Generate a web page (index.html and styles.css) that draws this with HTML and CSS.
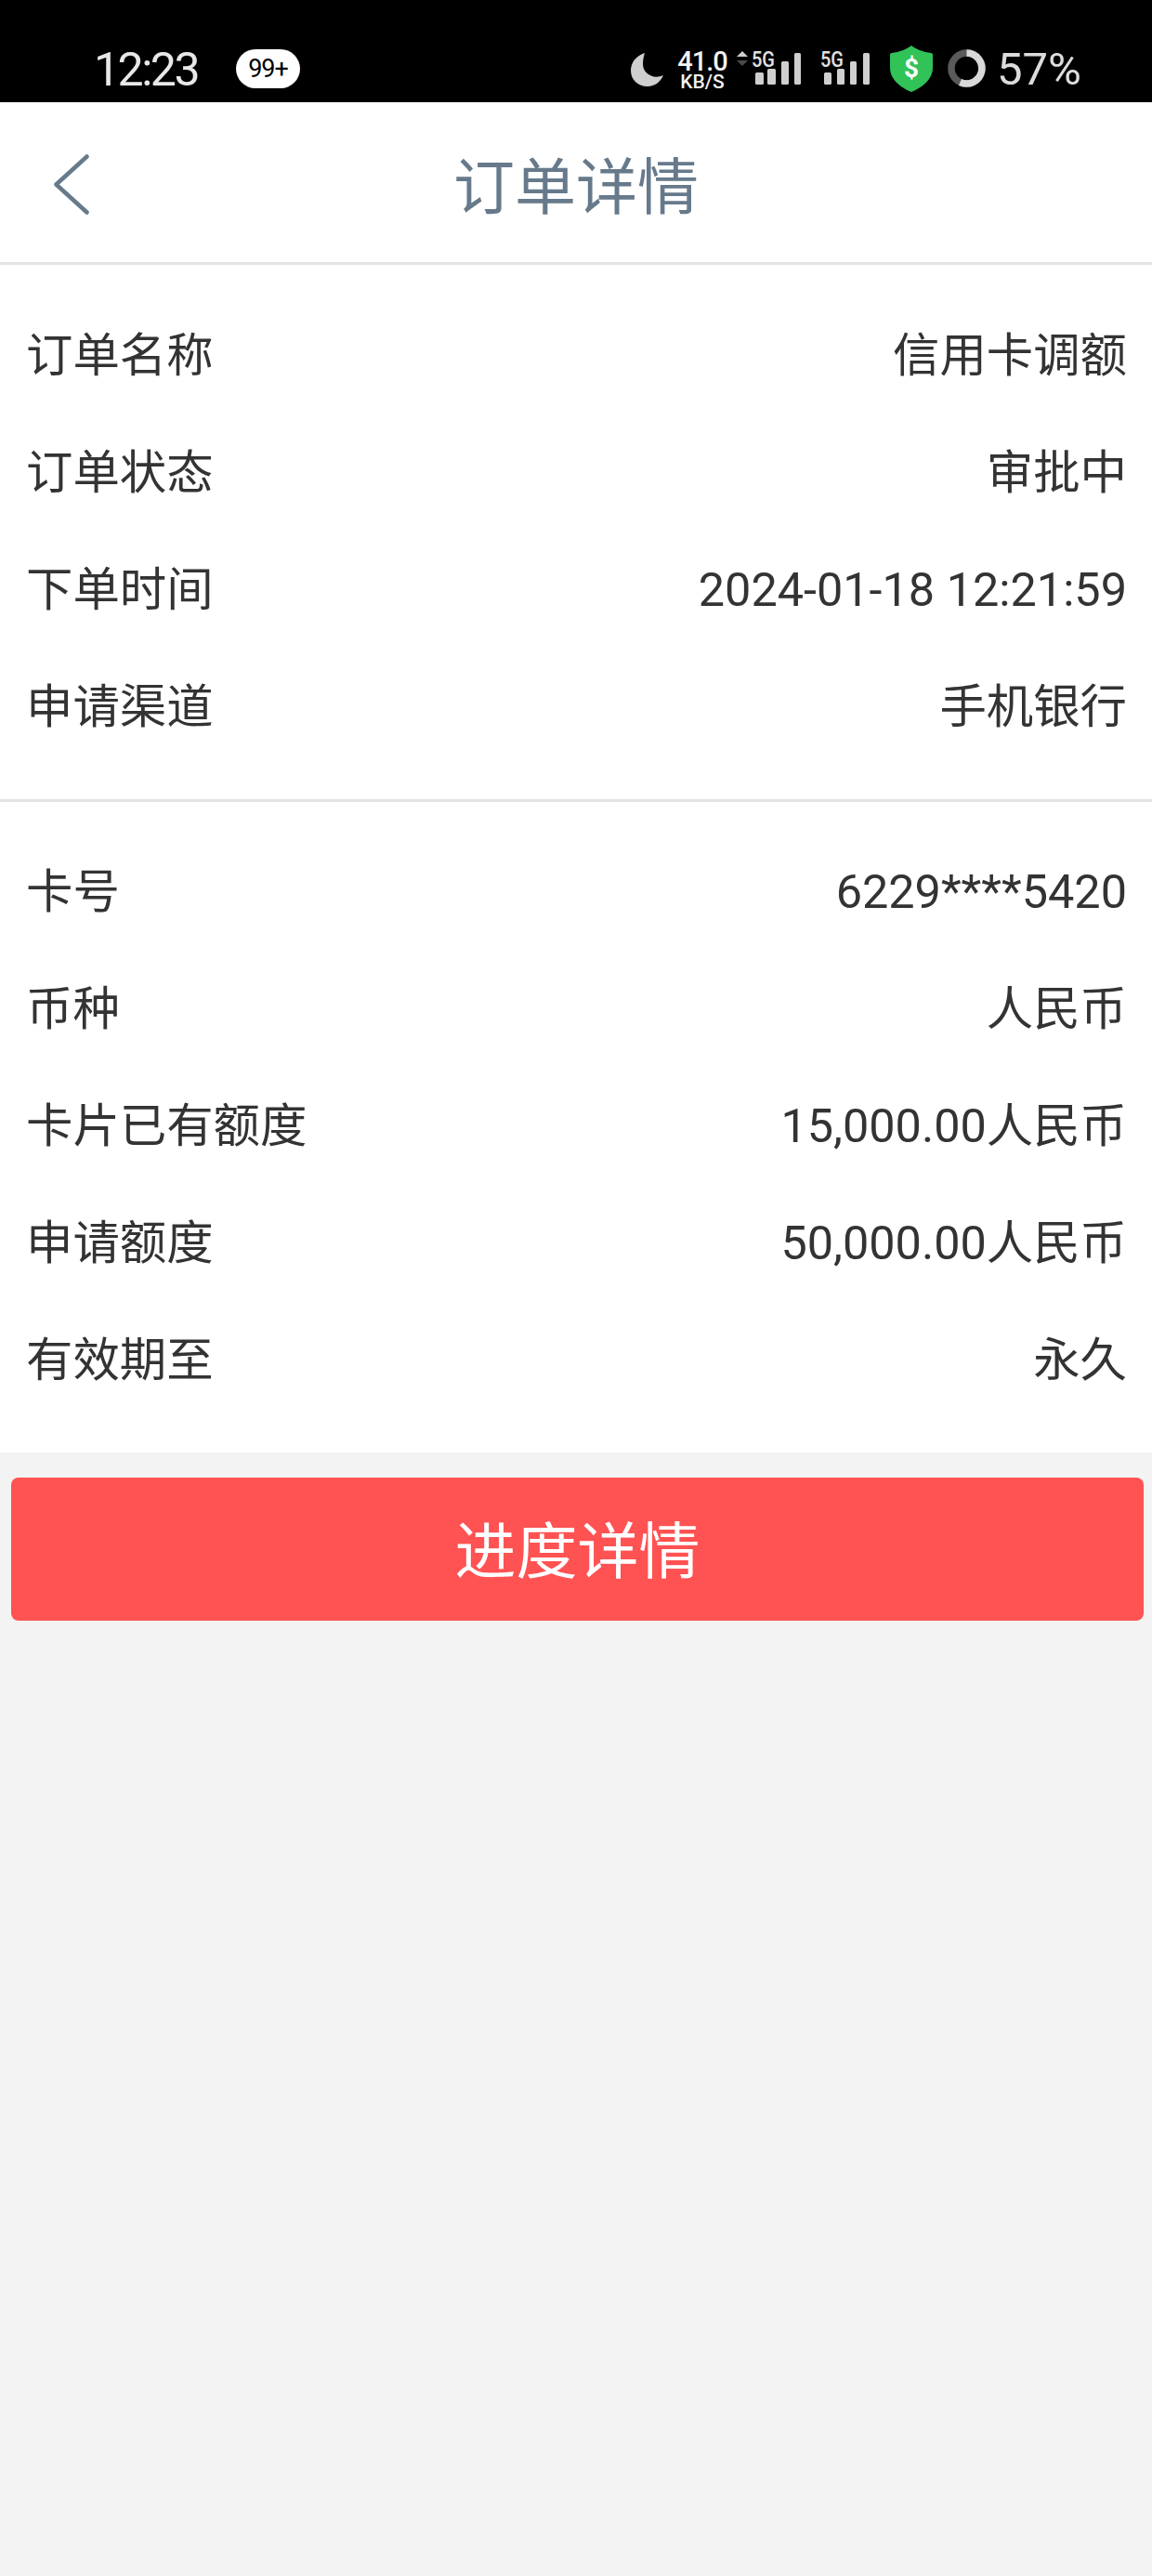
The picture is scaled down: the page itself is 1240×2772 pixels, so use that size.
FILE: index.html
```html
<!DOCTYPE html>
<html>
<head>
  <meta charset="utf-8">
  <link rel="stylesheet" href="styles.css">
</head>
<body>
  <div class="status-bar">
    <span class="clock">12:23</span>
    <span class="badge">99+</span>
    <div class="status-right">
      <svg class="moon" width="35" height="36" viewBox="0 0 35 36">
        <path d="M15 0C6 3 0 10 0 19C0 29 8 36 18 36C26 36 32 31 35 24C24 29 13 22 13 12C13 7 14 3 15 0z" fill="#cfcfcf"/>
      </svg>
      <div class="speed">
        <span class="speed-num">41.0</span>
        <span class="speed-unit">KB/S</span>
      </div>
      <svg class="signal-one" width="70" height="45" viewBox="0 0 70 45">
        <path d="M0 11L6 5L12 11z" fill="#cfcfcf"/>
        <path d="M0 15L6 21L12 15z" fill="#4a4a4a"/>
        <text x="16" y="22" class="net" textLength="25" lengthAdjust="spacingAndGlyphs">5G</text>
        <rect x="20" y="28" width="9" height="13" rx="1.500" fill="#cfcfcf"/>
        <rect x="33" y="24" width="9" height="17" rx="1.500" fill="#cfcfcf"/>
        <rect x="48" y="16" width="8" height="25" rx="1.500" fill="#cfcfcf"/>
        <rect x="62" y="7" width="7" height="34" rx="1.500" fill="#cfcfcf"/>
      </svg>
      <svg class="signal-two" width="54" height="45" viewBox="0 0 54 45">
        <text x="0" y="22" class="net" textLength="25" lengthAdjust="spacingAndGlyphs">5G</text>
        <rect x="4" y="28" width="8" height="13" rx="1.500" fill="#cfcfcf"/>
        <rect x="18" y="24" width="8" height="17" rx="1.500" fill="#cfcfcf"/>
        <rect x="32" y="16" width="7" height="25" rx="1.500" fill="#cfcfcf"/>
        <rect x="46" y="7" width="7" height="34" rx="1.500" fill="#cfcfcf"/>
      </svg>
      <svg class="shield" width="46" height="50" viewBox="0 0 46 50">
        <path d="M23 0C28 4 36 7 44 8C45.500 8 46 9 46 10V24C46 36 35 45 23 50C11 45 0 36 0 24V10C0 9 .5 8 2 8C10 7 18 4 23 0z" fill="#31c258"/>
        <text x="23" y="34" class="dollar">$</text>
      </svg>
      <svg class="ring" width="41" height="41" viewBox="0 0 41 41">
        <circle cx="20.500" cy="20.500" r="16.500" fill="none" stroke="#5a5a5a" stroke-width="7.500"/>
        <path d="M20.500 4A16.500 16.500 0 1 1 13.500 35.500" fill="none" stroke="#d8d8d8" stroke-width="7.500"/>
      </svg>
      <span class="battery">57%</span>
    </div>
  </div>

  <div class="header">
    <svg class="back" width="38" height="65" viewBox="0 0 38 65">
      <path d="M35.500 2.500L2.500 32.500L35.500 62.500" fill="none" stroke="#667a8b" stroke-width="4.500" stroke-linecap="round" stroke-linejoin="round"/>
    </svg>
    <h1>订单详情</h1>
  </div>

  <div class="section">
    <div class="row"><span>订单名称</span><span>信用卡调额</span></div>
    <div class="row"><span>订单状态</span><span>审批中</span></div>
    <div class="row"><span>下单时间</span><span>2024-01-18 12:21:59</span></div>
    <div class="row"><span>申请渠道</span><span>手机银行</span></div>
  </div>

  <div class="section last">
    <div class="row"><span>卡号</span><span>6229****5420</span></div>
    <div class="row"><span>币种</span><span>人民币</span></div>
    <div class="row"><span>卡片已有额度</span><span>15,000.00人民币</span></div>
    <div class="row"><span>申请额度</span><span>50,000.00人民币</span></div>
    <div class="row"><span>有效期至</span><span>永久</span></div>
  </div>

  <div class="actions">
    <div class="btn">进度详情</div>
  </div>
</body>
</html>
```

FILE: styles.css
```css
body {
  margin: 0;
  min-height: 2772px;
  background: #f3f3f3;
  font-family: Roboto, "Noto Sans CJK SC", sans-serif;
  color: #333;
}

/* Status bar */
.status-bar {
  height: 110px;
  box-sizing: border-box;
  padding: 50px 76px 0 101px;
  background: #000;
  display: flex;
  align-items: flex-start;
  color: #e8e8e8;
}

.clock {
  width: 153px;
  font-size: 50px;
  line-height: 50px;
  letter-spacing: -2.500px;
}

.badge {
  width: 69px;
  height: 42px;
  margin-top: 3px;
  border-radius: 21px;
  background: #fff;
  color: #000;
  font-size: 27px;
  line-height: 42px;
  letter-spacing: -1px;
  text-align: center;
}

.status-right {
  margin-left: auto;
  display: flex;
  align-items: flex-start;
}

.moon { margin: 7px 16px 0 0; }

.speed {
  width: 52px;
  margin-right: 11px;
  display: flex;
  flex-direction: column;
  align-items: center;
  font-weight: 500;
  color: #f2f2f2;
}

.speed-num { margin-top: 3px; font-size: 29px; line-height: 26px; letter-spacing: -1px; }
.speed-unit { font-size: 21px; line-height: 18px; }

.signal-one { margin-right: 20px; }
.signal-two { margin-right: 21px; }
.shield { margin: -1px 16px 0 0; }
.ring { margin: 3px 12px 0 0; }

.net {
  font-family: Roboto, sans-serif;
  font-size: 24px;
  font-weight: 500;
  fill: #e0e0e0;
}

.dollar {
  font-family: Roboto, sans-serif;
  font-size: 28px;
  font-weight: 700;
  fill: #fff;
  text-anchor: middle;
}

.battery {
  font-size: 49px;
  line-height: 50px;
  color: #dcdcdc;
}

/* Header */
.header {
  position: relative;
  height: 172px;
  background: #fff;
  border-bottom: 3px solid #e3e3e3;
  display: flex;
  align-items: center;
  justify-content: center;
}

.back {
  position: absolute;
  left: 58px;
  top: 56px;
}

.header h1 {
  margin: 0;
  font-size: 66px;
  font-weight: 400;
  color: #667a8b;
}

/* Detail rows */
.section {
  padding: 35px 0 36px;
  background: #fff;
  border-bottom: 3px solid #e3e3e3;
}

.section.last {
  padding: 34px 0 36px;
  border-bottom: none;
}

.row {
  height: 126px;
  padding: 0 27px 0 28px;
  display: flex;
  justify-content: space-between;
  font-size: 50.400px;
  line-height: 126px;
}

/* Button */
.actions {
  padding: 27px 9px 27px 12px;
}

.btn {
  height: 154px;
  border-radius: 8px;
  background: #ff5252;
  color: #fff;
  font-size: 66px;
  line-height: 162px;
  text-align: center;
}
```
